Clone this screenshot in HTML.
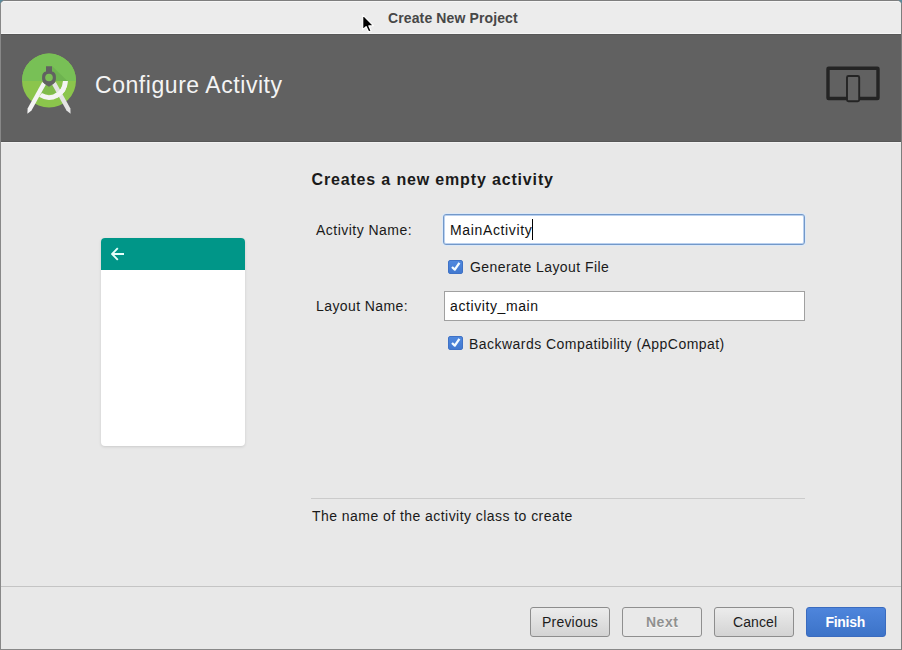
<!DOCTYPE html>
<html><head><meta charset="utf-8">
<style>
*{margin:0;padding:0;box-sizing:border-box}
html,body{width:902px;height:650px;overflow:hidden;background:#5a8a9c;font-family:"Liberation Sans",sans-serif;color:#2e3436}
.abs{position:absolute}
#win{position:absolute;left:0;top:0;width:902px;height:650px;border:1px solid #888;border-top-color:#7e7e7e;border-right-color:#7d7d7d;background:#e8e8e8;border-radius:5px 5px 0 0}
#title{position:absolute;left:1px;top:1px;width:900px;height:33px;background:#ececec;border-bottom:1px solid #f5f5f5;border-top:1px solid #f6f6f6;border-radius:4px 4px 0 0}
#hdr{position:absolute;left:1px;top:34px;width:900px;height:108px;background:#616161;border-top:1px solid #575757;border-bottom:1px solid #575757}
#hdrline{position:absolute;left:1px;top:142px;width:900px;height:1px;background:#f2f2f2}
.t{position:absolute;white-space:nowrap;line-height:1}
.lbl{font-size:14px;color:#1a1a1a}
.input{position:absolute;background:#fff}
.cb{position:absolute;width:15px;height:14px;border-radius:2px;background:linear-gradient(#4f88de,#4279d0);border:1px solid #3f72c6}
.btn{position:absolute;top:607px;width:80px;height:30px;border:1px solid #8d8d8d;border-radius:3px;background:linear-gradient(#ececec,#d3d3d3);font-size:14px;color:#1c1c1c}
.btn span{position:absolute;white-space:nowrap;line-height:1}
</style></head><body>
<div id="win"></div>
<div id="title"></div>
<div class="t" style="left:388px;top:11px;font-size:14px;font-weight:bold;color:#474747;letter-spacing:0.12px">Create New Project</div>
<div id="hdr"></div>
<div id="hdrline"></div>

<!-- logo -->
<svg class="abs" style="left:18px;top:50px" width="62" height="66" viewBox="18 50 62 66">
  <defs><clipPath id="cc"><circle cx="49" cy="80.6" r="27"/></clipPath></defs>
  <circle cx="49" cy="80.6" r="27" fill="#8bc54c"/>
  <g clip-path="url(#cc)">
    <rect x="20" y="50" width="60" height="31" fill="#78c056"/>
    <path d="M52 66 L67.5 81 L52 81 Z" fill="#6eb350"/>
      </g>
  <path d="M44 84 L54 84 L60 94 L38 94 Z" fill="#80bb4c"/>
  <path d="M67.7 81 A18.7 18.7 0 0 1 39 96.8 L41.9 93.1 A14 14 0 0 0 63 81 Z" fill="#f4f4f4"/>
  <path d="M55.8 82.1 L70.4 108.4 L70.6 113.8 L66.5 110.6 L51.9 84.3 Z" fill="#e3e3e3"/>
  <path d="M67.7 81 A18.7 18.7 0 0 1 56 98.3 L54.2 93.9 A14 14 0 0 0 63 81 Z" fill="#f4f4f4"/>
  <path d="M42.2 82.1 L27.6 108.4 L27.4 113.8 L31.5 110.6 L46.1 84.3 Z" fill="#f4f4f4"/>
  <path d="M46 66.3 H52 V71.4 Q55.9 72.2 55.9 76.5 V79.2 Q55.9 81.6 53.4 84 L49 86.7 L44.6 84 Q42.1 81.6 42.1 79.2 V76.5 Q42.1 72.2 46 71.4 Z" fill="#616161"/>
  <circle cx="49" cy="77.5" r="3.8" fill="#7bbf55"/>
</svg>

<div class="t" style="left:95px;top:74px;font-size:23px;color:#f4f4f4;letter-spacing:0.55px">Configure Activity</div>

<!-- device icon -->
<svg class="abs" style="left:820px;top:60px" width="66" height="48" viewBox="820 60 66 48">
  <rect x="828" y="68.2" width="50" height="30.3" fill="none" stroke="#242424" stroke-width="3.4" rx="0.6"/>
  <rect x="847" y="76" width="12.2" height="25.2" rx="1.5" fill="#636363" stroke="#242424" stroke-width="1.9"/>
</svg>

<!-- cursor -->
<svg class="abs" style="left:356px;top:10px" width="22" height="25" viewBox="356 10 22 25">
  <path d="M362.7 14.8 L362.7 29.8 L366.1 26.6 L368.7 32 L371.2 30.9 L368.9 25.9 L373.4 25.7 Z" fill="#000" stroke="#fff" stroke-width="1.2" stroke-linejoin="round"/>
</svg>

<!-- preview card -->
<div class="abs" style="left:101px;top:238px;width:144px;height:208px;background:#fff;border-radius:4px;box-shadow:0 1px 3px rgba(0,0,0,0.13);overflow:hidden">
  <div class="abs" style="left:0;top:0;width:144px;height:32px;background:#009688"></div>
  <svg class="abs" style="left:10px;top:9px" width="14" height="14" viewBox="0 0 14 14"><path d="M13 7 H1.5 M6.8 1.2 L1 7 L6.8 12.8" fill="none" stroke="#e6fffb" stroke-width="1.9"/></svg>
</div>

<div class="t" style="left:311.5px;top:172px;font-size:16px;font-weight:bold;color:#1a1a1a;letter-spacing:0.84px">Creates a new empty activity</div>

<div class="t lbl" style="left:316px;top:223px;letter-spacing:0.47px">Activity Name:</div>
<div class="input" style="left:443px;top:214px;width:362px;height:31px;border:1px solid #7398c8;border-radius:3px;box-shadow:inset 0 0 0 1px #b9d0ef,0 0 0 1px #dce9f8"></div>
<div class="t lbl" style="left:450px;top:223px;letter-spacing:0.64px;color:#111">MainActivity</div>
<div class="abs" style="left:532px;top:219px;width:1px;height:21px;background:#000"></div>

<div class="cb" style="left:448px;top:260px"></div>
<svg class="abs" style="left:448px;top:260px" width="15" height="14" viewBox="0 0 15 14"><path d="M4 7 L6.8 9.6 L11.4 2.8" fill="none" stroke="#f4fbff" stroke-width="2.3" stroke-linejoin="round"/></svg>
<div class="t lbl" style="left:470px;top:260px;letter-spacing:0.42px">Generate Layout File</div>

<div class="t lbl" style="left:316px;top:299px;letter-spacing:0.41px">Layout Name:</div>
<div class="input" style="left:444px;top:291px;width:361px;height:30px;border:1px solid #a0a0a0"></div>
<div class="t lbl" style="left:450px;top:299px;letter-spacing:0.59px;color:#111">activity_main</div>

<div class="cb" style="left:448px;top:336px"></div>
<svg class="abs" style="left:448px;top:336px" width="15" height="14" viewBox="0 0 15 14"><path d="M4 7 L6.8 9.6 L11.4 2.8" fill="none" stroke="#f4fbff" stroke-width="2.3" stroke-linejoin="round"/></svg>
<div class="t lbl" style="left:469px;top:337px;letter-spacing:0.46px">Backwards Compatibility (AppCompat)</div>

<div class="abs" style="left:311px;top:498px;width:494px;height:1px;background:#cbcbcb"></div>
<div class="t lbl" style="left:312px;top:509px;letter-spacing:0.45px">The name of the activity class to create</div>

<div class="abs" style="left:1px;top:586px;width:900px;height:1px;background:#c4c4c4"></div>

<div class="btn" style="left:530px"><span style="left:11px;top:7px;letter-spacing:0.2px">Previous</span></div>
<div class="btn" style="left:622px;border-color:#8f8f8f;background:#e9e9e9;color:#909090;text-shadow:0 1px 0 #fafafa"><span style="left:23px;top:7px;letter-spacing:0.5px;font-weight:bold">Next</span></div>
<div class="btn" style="left:714px"><span style="left:18px;top:7px;letter-spacing:0.1px">Cancel</span></div>
<div class="btn" style="left:806px;border-color:#3a6bbf;background:linear-gradient(#4e85dc,#3c73c8);color:#fff;font-weight:bold"><span style="left:18.5px;top:7px;letter-spacing:-0.3px">Finish</span></div>

</body></html>
